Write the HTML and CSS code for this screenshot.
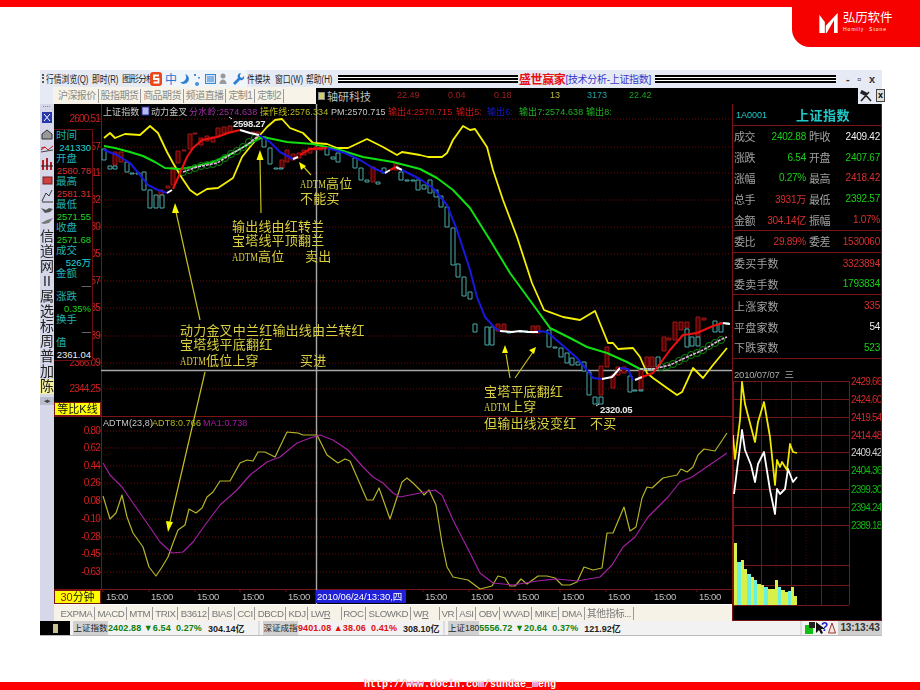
FILE: index.html
```html
<!DOCTYPE html>
<html lang="zh">
<head>
<meta charset="utf-8">
<title>技术分析-上证指数</title>
<link rel="stylesheet" href="styles.css">
</head>
<body>
<div class="page">
  <header class="top-band"></header>
  <div class="logo">
    <svg class="logo-mark" viewBox="0 0 22 24"><path d="M1 3l6 8v12H1zM21 1v22h-4V9L9 23h-1v-8z" fill="#fff"/></svg>
    <div class="logo-text"><span class="logo-cn">弘历软件</span><span class="logo-en">Homily  Stone</span></div>
  </div>

  <main class="window">
    <div class="menu-bar">
      <span class="grip"></span>
      <span class="menu-item m1">行情浏览(Q)</span>
      <span class="menu-item m2">即时(R)</span>
      <span class="menu-item m3">图形分析</span>
      <div class="ime">
        <svg viewBox="0 0 96 16" width="96" height="16">
          <rect x="0" y="1" width="12" height="14" rx="3" fill="#e8481c"/>
          <path d="M9 4.500H4v3.500h4.500v3.500H3.500" fill="none" stroke="#fff" stroke-width="1.800"/>
          <text class="ime-zh" x="15" y="12.500">中</text>
          <path d="M35 3a5 5 0 1 1-5 8a5 5 0 0 0 5-8z" fill="#2f7fd0"/>
          <path d="M44 3h2v2h-2zM48 6h2v1.500h-2zM47 11a2 2 0 1 0 .1 0" fill="#4a90d8"/>
          <rect x="55.500" y="3.500" width="10" height="9" fill="#cfe2f6" stroke="#3a88d4"/>
          <path d="M57 6h7M57 8h7M57 10h7" stroke="#3a88d4"/>
          <circle cx="73" cy="5" r="2.500" fill="#9a9a9a"/><path d="M69.500 13c0-6 7-6 7 0z" fill="#9a9a9a"/>
          <path d="M91 2c-3 0-4 3-3 5l-5 5 2 2 5-5c2 1 5-1 4-4l-2 2-2-1v-2z" fill="#2f7fd0"/>
        </svg>
      </div>
      <span class="menu-item m4">件模块</span>
      <span class="menu-item m5">窗口(W)</span>
      <span class="menu-item m6">帮助(H)</span>
      <div class="stripes"></div>
      <div class="win-title"><span class="t-red">盛世赢家</span><span class="t-blue">[技术分析-上证指数]</span></div>
      <div class="stripes s2"></div>
      <div class="win-btns"><span>-</span><span>▫</span><span>x</span></div>
    </div>

    <div class="tab-row">
      <div class="tab-lead"></div>
      <nav class="market-tabs">
        <span>沪深报价</span><span>股指期货</span><span>商品期货</span><span>频道直播</span><span>定制1</span><span>定制2</span>
      </nav>
      <div class="ticker">
        <span class="tk-icon"></span>
        <span class="tk-name">轴研科技</span>
        <span class="tk n1">22.49</span><span class="tk n2">0.04</span><span class="tk n3">0.18</span>
        <span class="tk n4">13</span><span class="tk n5">3173</span><span class="tk n6">22.42</span>
      </div>
      <div class="tool-btns">
        <svg viewBox="0 0 14 14" width="14" height="14"><path d="M2 12L10 3M4 3l8 9M3 2l4 2-1 2-4-2z" stroke="#222" stroke-width="1.600" fill="#555"/></svg>
        <span class="x-btn">x</span>
      </div>
    </div>

    <div class="main-row">
      <aside class="sidebar">
        <svg class="side-icons" viewBox="0 0 14 122" width="14" height="122">
          <path d="M3 2.500h8" stroke="#888" stroke-dasharray="1 1"/>
          <rect x="2" y="8" width="10" height="11" fill="#2838a8"/><path d="M4 10l6 7M10 10l-6 7" stroke="#fff"/>
          <path d="M2 30l5-4 5 4v5H2z" fill="#999" stroke="#333"/>
          <path d="M1 46l4-3 3 3 5-4M1 44l4-1" stroke="#c02020" fill="none"/><path d="M1 48l12-2" stroke="#444"/>
          <path d="M3 56v10M7 54v12M11 58v8" stroke="#b02020" stroke-width="2"/><path d="M1 62h12" stroke="#222"/>
          <rect x="3" y="73" width="9" height="7" fill="#d04040" stroke="#702020"/>
          <path d="M2 97l4-8 3 3 3-6M2 98h11" stroke="#333" fill="none"/>
          <path d="M1 104l5 2 3-2 4 1-3 3-5 1z" fill="#555"/>
          <path d="M1 119l6-3 6-2-4 5-5 1z" fill="#777"/>
        </svg>
        <div class="side-glyphs">
          <span>信</span><span>道</span><span>网</span><span>II</span><span>属</span><span>选</span><span>标</span><span>周</span><span>普</span><span>加</span>
          <span class="side-active">陈</span>
        </div>
        <div class="side-arrows">◂▸</div>
      </aside>

      <section class="chart-col">
        <div class="chart-area">
          <svg class="chart" viewBox="54 104 678 500" width="678" height="500" xmlns="http://www.w3.org/2000/svg">
            <!-- grid -->
            <path class="grid" d="M101 119H732M101 147H732M101 173H732M101 200H732M101 227H732M101 254H732M101 281H732M101 308H732M101 336H732M101 363H732M101 389H732M101 431H732M101 448H732M101 466H732M101 483H732M101 501H732M101 519H732M101 537H732M101 554H732M101 572H732"/>
            <path class="frame" d="M101.500 104V589M54 416.500H732M54 589.500H732"/>
            <path class="ticks" d="M101 119h-3M101 147h-3M101 173h-3M101 200h-3M101 227h-3M101 254h-3M101 281h-3M101 308h-3M101 336h-3M101 363h-3M101 389h-3M101 431h-3M101 448h-3M101 466h-3M101 483h-3M101 501h-3M101 519h-3M101 537h-3M101 554h-3M101 572h-3M103 589v3M149 589v3M195 589v3M240 589v3M286 589v3M423 589v3M469 589v3M515 589v3M560 589v3M606 589v3M652 589v3M697 589v3"/>
            <!-- price axis -->
            <g class="axis-r">
              <text x="100" y="122">2600.51</text><text x="100" y="150">57</text><text x="100" y="176">11</text>
              <text x="100" y="203">82</text><text x="100" y="230">30</text><text x="100" y="257">05</text>
              <text x="100" y="284">57</text><text x="100" y="311">35</text><text x="100" y="339">39</text>
              <text x="100" y="366">2366.09</text><text x="100" y="392">2344.25</text>
              <text x="100" y="434">0.80</text><text x="100" y="451">0.62</text><text x="100" y="469">0.44</text><text x="100" y="486">0.26</text>
              <text x="100" y="504">0.08</text><text x="100" y="522">-0.10</text><text x="100" y="540">-0.28</text><text x="100" y="557">-0.45</text><text x="100" y="575">-0.63</text>
            </g>
            <!-- crosshair -->
            <path class="cross" d="M316.500 104V605M101 370.500H732"/>
            <!-- candles -->
            <path class="c-red" d="M113 152h4V165h-4zM119 152h4V162h-4zM159 190h4V198h-4zM166 186h4V188h-4zM171 167h4V185h-4zM176 151h4V163h-4zM182 150h4V151h-4zM188 134h4V149h-4zM193 133h4V134h-4zM199 138h4V145h-4zM205 136h4V141h-4zM211 137h4V142h-4zM216 128h4V137h-4zM222 127h4V133h-4zM228 126h4V132h-4zM251 132h4V133h-4zM256 132h4V136h-4zM280 160h4V168h-4zM285 150h4V162h-4zM291 154h4V160h-4zM297 153h4V158h-4zM302 150h4V155h-4zM308 148h4V153h-4zM314 147h4V150h-4zM319 147h4V150h-4zM371 167h4V182h-4zM394 163h4V170h-4zM496 324h4V331h-4zM502 324h4V331h-4zM531 326h4V333h-4zM536 326h4V333h-4zM599 366h4V395h-4zM605 347h4V367h-4zM611 375h4V388h-4zM616 367h4V375h-4zM622 367h4V373h-4zM639 370h4V390h-4zM645 357h4V367h-4zM650 357h4V367h-4zM662 337h4V351h-4zM667 338h4V340h-4zM673 322h4V340h-4zM679 322h4V330h-4zM685 322h4V328h-4zM696 317h4V337h-4zM702 318h4V320h-4z"/>
            <path class="c-cyan" d="M102 149h4V160h-4zM108 166h4V169h-4zM113 166h4V169h-4zM125 162h4V172h-4zM130 173h4V174h-4zM136 173h4V174h-4zM142 172h4V190h-4zM148 190h4V208h-4zM154 195h4V208h-4zM160 195h4V208h-4zM262 137h4V147h-4zM268 148h4V164h-4zM274 168h4V169h-4zM279 168h4V169h-4zM325 148h4V155h-4zM331 157h4V159h-4zM336 153h4V162h-4zM353 158h4V168h-4zM359 168h4V180h-4zM365 180h4V182h-4zM376 182h4V184h-4zM382 168h4V173h-4zM399 172h4V180h-4zM405 180h4V181h-4zM411 180h4V181h-4zM416 180h4V190h-4zM422 185h4V189h-4zM428 180h4V193h-4zM434 190h4V197h-4zM439 196h4V207h-4zM445 207h4V227h-4zM451 228h4V265h-4zM456 264h4V277h-4zM462 277h4V296h-4zM468 292h4V299h-4zM473 324h4V332h-4zM485 327h4V345h-4zM490 327h4V345h-4zM507 332h4V333h-4zM519 331h4V332h-4zM524 331h4V332h-4zM547 330h4V347h-4zM553 347h4V348h-4zM559 348h4V357h-4zM565 353h4V363h-4zM570 358h4V365h-4zM576 362h4V365h-4zM582 362h4V371h-4zM587 372h4V395h-4zM593 397h4V404h-4zM599 397h4V404h-4zM628 376h4V392h-4zM633 390h4V391h-4zM639 390h4V391h-4zM656 357h4V367h-4zM685 329h4V347h-4zM690 337h4V346h-4zM696 337h4V346h-4zM713 321h4V332h-4zM719 323h4V332h-4zM725 323h4V324h-4z"/>
            <!-- upper band -->
            <polyline class="l-yellow" points="104,138 110,133 115,138 125,134 140,135 150,126 158,133 167,152 173,163 182,178 190,190 197,195 207,189 218,188 233,178 242,157 250,147 260,135 267,127 275,120 282,119 290,128 303,133 313,143 327,144 337,148 348,148 367,139 383,147 397,155 402,152 420,155 428,157 442,157 447,153 453,140 463,126 470,130 475,129 487,147 493,170 503,200 517,237 532,283 544,310 563,317 580,320 595,311 608,343 613,343 618,349 633,348 640,357 647,373 653,378 667,388 677,395 682,392 693,368 703,378 713,365 727,348"/>
            <!-- MA -->
            <polyline class="l-green" points="104,146 115,148 130,152 143,156 155,162 165,168 180,169 193,167 213,162 233,153 250,143 263,137 287,142 313,144 340,150 363,157 393,162 420,169 437,178 453,190 470,208 490,240 510,273 537,310 550,328 570,338 587,347 607,353 627,362 640,369 655,369"/>
            <!-- green rings -->
            <g class="rings">
              <circle cx="183" cy="172" r="3.500"/><circle cx="189" cy="170" r="3.500"/><circle cx="195" cy="168" r="3.500"/><circle cx="201" cy="166" r="3.500"/><circle cx="207" cy="165" r="3.500"/><circle cx="213" cy="164" r="3.500"/><circle cx="219" cy="162" r="3.500"/><circle cx="225" cy="158" r="3.500"/><circle cx="231" cy="154" r="3.500"/><circle cx="237" cy="151" r="3.500"/><circle cx="243" cy="147" r="3.500"/><circle cx="249" cy="142" r="3.500"/><circle cx="255" cy="138" r="3.500"/>
              <circle cx="661" cy="367" r="3.500"/><circle cx="667" cy="366" r="3.500"/><circle cx="673" cy="364" r="3.500"/><circle cx="679" cy="361" r="3.500"/><circle cx="685" cy="358" r="3.500"/><circle cx="691" cy="355" r="3.500"/><circle cx="697" cy="353" r="3.500"/><circle cx="703" cy="350" r="3.500"/><circle cx="709" cy="346" r="3.500"/><circle cx="715" cy="343" r="3.500"/><circle cx="721" cy="340" r="3.500"/>
            </g>
            <polyline class="l-pink" points="183,172 197,167 217,163 233,153 247,145 259,135"/>
            <polyline class="l-pink" points="640,369 653,369 670,365 687,357 703,350 720,340 727,337"/>
            <!-- output line -->
            <polyline class="l-blue" points="104,150 117,155 130,163 140,175 148,185 158,190 167,193"/>
            <polyline class="l-white" points="167,193 172,190"/>
            <polyline class="l-red" points="173,189 180,173 187,157 193,148 202,140 217,137 228,133 240,130"/>
            <polyline class="l-white" points="240,130 250,133 259,135"/>
            <polyline class="l-blue" points="259,135 270,142 280,152 293,159"/>
            <polyline class="l-white" points="293,159 298,157"/>
            <polyline class="l-red" points="300,155 310,149 327,148"/>
            <polyline class="l-blue" points="327,148 345,153 360,160 373,168 385,173"/>
            <polyline class="l-white" points="385,173 390,170"/>
            <polyline class="l-red" points="390,170 396,167"/>
            <polyline class="l-white" points="396,167 402,170"/>
            <polyline class="l-blue" points="402,170 420,179 433,188 447,205 457,230 470,270 477,297 485,317 495,328 500,331"/>
            <polyline class="l-white" points="500,331 512,332 520,331 528,332 538,332"/>
            <polyline class="l-blue" points="538,331 547,332 560,343 577,358 587,370 593,378 602,379"/>
            <polyline class="l-white" points="602,379 612,377 620,368"/>
            <polyline class="l-blue" points="620,368 628,369 633,380"/>
            <polyline class="l-white" points="635,380 642,377"/>
            <polyline class="l-red" points="642,377 653,373 670,350 683,335 697,333 713,326 723,323"/>
            <polyline class="l-white" points="723,323 730,324"/>
            <!-- lower pane -->
            <polyline class="l-olive" points="103,496 110,519 116,513 122,495 127,517 133,533 143,547 149,567 156,576 162,567 168,557 173,543 178,530 185,525 189,509 196,513 202,508 207,497 213,492 220,481 230,481 240,463 247,460 253,461 258,452 265,452 275,457 287,432 298,433 303,435 317,435 327,455 338,463 345,459 350,461 367,500 373,500 379,488 390,519 402,482 407,478 413,483 422,492 424,495 429,490 436,505 442,543 447,567 453,577 468,580 480,589 492,586 498,576 505,578 510,586 515,586 521,579 527,584 538,576 547,576 555,578 562,585 570,585 577,582 584,567 593,570 602,568 607,533 613,533 624,507 630,531 636,527 642,498 647,487 652,488 663,478 677,475 681,469 687,472 693,467 698,455 704,449 715,451 727,433"/>
            <polyline class="l-purple" points="103,463 110,475 122,487 133,503 147,523 160,542 172,553 183,552 193,542 205,525 220,505 237,490 250,475 267,462 280,457 297,443 310,438 320,435 333,440 348,450 363,467 373,477 383,483 393,493 400,497 420,493 435,490 442,495 453,520 470,553 480,573 493,583 513,585 537,581 557,579 577,581 600,577 612,565 623,547 635,537 648,517 668,497 680,482 692,477 727,453"/>
            <!-- arrows -->
            <path class="arrow" d="M200 320L176 212M261 213L260 158M311 175L302 165M205 372L170 522M510 378L506 354M515 378L533 352"/>
            <path class="head" d="M175 203l-3 10h7zM260 150l-3.500 10h7zM299 162l2 8 5-4zM168 532l5-10-7-1zM505 345l-3 8h6zM536 347l-7 3 5 4z"/>
            <!-- extremes -->
            <text class="extreme" x="233" y="127">2598.27</text>
            <path class="extreme-line" d="M232 119l-3-2M596 406l3-2"/>
            <text class="extreme" x="600" y="413">2320.05</text>
            <!-- header -->
            <g class="hdr">
              <text class="c-gray" x="103" y="115">上证指数</text>
              <rect x="142" y="107" width="7" height="8" fill="#b8b8f0" stroke="#3030a0"/>
              <text class="c-gray" x="151" y="115">动力金叉</text>
              <text class="c-mag" x="189" y="115">分水岭:2574.638</text>
              <text class="c-yel" x="260" y="115">操作线:2576.334</text>
              <text class="c-gray" x="331" y="115">PM:2570.715</text>
              <text class="c-red2" x="388" y="115">输出4:2570.715</text>
              <text class="c-red2" x="456" y="115">输出5:</text>
              <text class="c-blu" x="487" y="115">输出6:</text>
              <text class="c-grn" x="519" y="115">输出7:2574.638</text>
              <text class="c-grn" x="586" y="115">输出8:</text>
              <text class="c-gray" x="103" y="426">ADTM(23,8)</text>
              <text class="c-yel" x="152" y="426">ADT8:0.766</text>
              <text class="c-mag2" x="203" y="426">MA1:0.738</text>
            </g>
            <!-- annotations -->
            <g class="note">
              <text x="180" y="335">动力金叉中兰红输出线由兰转红</text>
              <text x="180" y="349">宝塔线平底翻红</text>
              <text x="180" y="365"><tspan textLength="26" lengthAdjust="spacingAndGlyphs">ADTM</tspan>低位上穿<tspan x="300">买进</tspan></text>
              <text x="232" y="231">输出线由红转兰</text>
              <text x="232" y="245">宝塔线平顶翻兰</text>
              <text x="232" y="261"><tspan textLength="26" lengthAdjust="spacingAndGlyphs">ADTM</tspan>高位<tspan x="305">卖出</tspan></text>
              <text x="300" y="188"><tspan textLength="26" lengthAdjust="spacingAndGlyphs">ADTM</tspan>高位</text>
              <text x="300" y="203">不能买</text>
              <text x="484" y="396">宝塔平底翻红</text>
              <text x="484" y="411"><tspan textLength="26" lengthAdjust="spacingAndGlyphs">ADTM</tspan>上穿</text>
              <text x="484" y="428">但输出线没变红<tspan x="590">不买</tspan></text>
            </g>
            <!-- time axis -->
            <g class="time">
              <text x="106" y="600">15:00</text><text x="151" y="600">15:00</text><text x="197" y="600">15:00</text><text x="242" y="600">15:00</text><text x="288" y="600">15:00</text>
              <text x="425" y="600">15:00</text><text x="471" y="600">15:00</text><text x="517" y="600">15:00</text><text x="562" y="600">15:00</text><text x="608" y="600">15:00</text><text x="654" y="600">15:00</text><text x="699" y="600">15:00</text>
            </g>
            <rect x="316" y="590" width="90" height="13" fill="#2020d8"/>
            <text class="time-hi" x="317" y="600">2010/06/24/13:30,四</text>
          </svg>
          <!-- info panel over the price axis -->
          <div class="info-box">
            <span class="ib-l">时间</span><span class="ib-v cy">241330</span>
            <span class="ib-l">开盘</span><span class="ib-v rd">2580.78</span>
            <span class="ib-l">最高</span><span class="ib-v rd">2581.31</span>
            <span class="ib-l">最低</span><span class="ib-v gn">2571.55</span>
            <span class="ib-l">收盘</span><span class="ib-v gn">2571.68</span>
            <span class="ib-l">成交</span><span class="ib-v cy">526万</span>
            <span class="ib-l">金额</span><span class="ib-v gy">—</span>
            <span class="ib-l">涨跌</span><span class="ib-v gn">0.35%</span>
            <span class="ib-l">换手</span><span class="ib-v gy">—</span>
            <span class="ib-l">值</span><span class="ib-v wh">2361.04</span>
          </div>
          <div class="btn-y ratio"><span>等比K线</span></div>
          <div class="btn-y period"><span><b>30</b>分钟</span></div>
        </div>
        <nav class="ind-tabs">
          <span>EXPMA</span><span>MACD</span><span>MTM</span><span>TRIX</span><span>B3612</span><span>BIAS</span><span>CCI</span><span>DBCD</span><span>KDJ</span><span class="u-r">LW<u>R</u></span><span class="gap-r">ROC</span><span>SLOWKD</span><span class="u-r">W<u>R</u></span><span class="gap-r">VR</span><span>ASI</span><span>OBV</span><span>WVAD</span><span>MIKE</span><span>DMA</span><span>其他指标...</span>
        </nav>
      </section>

      <aside class="quote">
        <div class="q-head"><span class="q-code">1A0001</span><span class="q-name">上证指数</span></div>
        <div class="q-sec">
          <div class="q-row"><span class="lb">成交</span><span class="g">2402.88</span><span class="lb">昨收</span><span class="w">2409.42</span></div>
          <div class="q-row"><span class="lb">涨跌</span><span class="g">6.54</span><span class="lb">开盘</span><span class="g">2407.67</span></div>
          <div class="q-row"><span class="lb">涨幅</span><span class="g">0.27%</span><span class="lb">最高</span><span class="r">2418.42</span></div>
          <div class="q-row"><span class="lb">总手</span><span class="r">3931万</span><span class="lb">最低</span><span class="g">2392.57</span></div>
          <div class="q-row"><span class="lb">金额</span><span class="r">304.14亿</span><span class="lb">振幅</span><span class="r">1.07%</span></div>
        </div>
        <div class="q-sec">
          <div class="q-row"><span class="lb">委比</span><span class="r">29.89%</span><span class="lb">委差</span><span class="r">1530060</span></div>
        </div>
        <div class="q-sec">
          <div class="q-row wide"><span class="lb">委买手数</span><span class="r">3323894</span></div>
          <div class="q-row wide"><span class="lb">委卖手数</span><span class="g">1793834</span></div>
        </div>
        <div class="q-sec">
          <div class="q-row wide"><span class="lb">上涨家数</span><span class="r">335</span></div>
          <div class="q-row wide"><span class="lb">平盘家数</span><span class="w">54</span></div>
          <div class="q-row wide"><span class="lb">下跌家数</span><span class="g">523</span></div>
        </div>
        <svg class="mini" viewBox="733 357 148 247" width="148" height="247" xmlns="http://www.w3.org/2000/svg">
          <text class="mini-date" x="734" y="376">2010/07/07  三</text>
          <path class="mini-dash" d="M747 379V603M776 379V603M806 379V603M835 379V603"/>
          <path class="mini-grid" d="M733 379.500H849M733 397.500H849M733 415.500H849M733 433.500H849M733 450.500H849M733 468.500H849M733 487.500H849M733 505.500H849M733 523.500H849M733 563.500H849M733 583.500H849M761.500 379V603M791.500 379V603M821.500 379V603M849.500 379V603M733.500 379V603M733 603.500H849"/>
          <path class="vol-y" d="M734 541h3v62h-3zM741 558h3v45h-3zM744 567h3v36h-3zM751 575h3v28h-3zM757 582h4v21h-4zM761 583h3v20h-3zM768 587h3v16h-3zM771 587h4v16h-4zM775 578h3v25h-3zM781 588h4v15h-4zM785 590h3v13h-3zM791 585h3v18h-3zM794 594h3v9h-3z"/>
          <path class="vol-c" d="M737 560h4v43h-4zM747 572h4v31h-4zM754 578h3v25h-3zM764 585h4v18h-4zM778 585h3v18h-3zM788 589h3v14h-3z"/>
          <polyline class="m-yellow" points="733,433 735,457 740,418 742,380 745,402 751,425 755,440 758,420 764,400 770,435 775,483 777,458 780,465 782,460 787,468 790,442 793,450 797,451"/>
          <polyline class="m-white" points="734,492 737,468 740,445 742,428 745,448 751,463 755,480 758,462 764,450 770,488 775,512 777,487 780,492 785,487 788,467 793,480 797,475"/>
          <g class="mini-axis">
            <text class="mr" x="851" y="383">2429.66</text><text class="mr" x="851" y="401">2424.60</text><text class="mr" x="851" y="419">2419.54</text><text class="mr" x="851" y="437">2414.48</text>
            <text class="mw" x="851" y="454">2409.42</text>
            <text class="mg" x="851" y="472">2404.36</text><text class="mg" x="851" y="491">2399.30</text><text class="mg" x="851" y="509">2394.24</text><text class="mg" x="851" y="527">2389.18</text>
          </g>
        </svg>
      </aside>
    </div>

    <footer class="status-bar">
      <div class="st-black"><span class="st-glyph"></span></div>
      <div class="st-item i1"><span class="st-name">上证指数</span><span class="dn">2402.88 ▼6.54  0.27%</span><span class="amt">304.14亿</span></div>
      <div class="st-item i2"><span class="st-name">深证成指</span><span class="up">9401.08 ▲38.06  0.41%</span><span class="amt">308.10亿</span></div>
      <div class="st-item i3"><span class="st-name">上证180</span><span class="dn">5556.72 ▼20.64  0.37%</span><span class="amt">121.92亿</span></div>
      <div class="st-icons">
        <svg viewBox="0 0 34 14" width="34" height="14">
          <rect x="3" y="4" width="8" height="9" fill="#10c010"/><rect x="7" y="1" width="6" height="6" fill="#222"/>
          <path d="M14 1v11l3-3 2 4 2-1-2-4h4z" fill="#111"/>
          <text class="st-q" x="19" y="10">?</text>
          <path d="M30 2l-3.500 10h7z" fill="#f0e8e0" stroke="#a03030"/>
        </svg>
      </div>
      <div class="st-time">13:13:43</div>
    </footer>
  </main>

  <footer class="bottom-band"><span class="url">http://www.docin.com/sundae_meng</span></footer>
</div>
</body>
</html>
```

FILE: styles.css
```css
* { box-sizing: border-box; }
html, body { margin: 0; padding: 0; background: #fff; }
body { font-family: "Liberation Sans", "Noto Sans CJK SC", sans-serif; }
.page { position: relative; width: 920px; height: 690px; overflow: hidden; display: flex; flex-direction: column; }

.top-band { height: 7px; flex: none; background: #ff0000; }
.logo { position: absolute; top: 0; right: 0; width: 128px; height: 47px; background: #f60000; border-bottom-left-radius: 18px; display: flex; align-items: flex-start; padding: 12px 0 0 26px; gap: 4px; color: #fff; }
.logo-mark { width: 21px; height: 22px; flex: none; }
.logo-text { display: flex; flex-direction: column; line-height: 1; }
.logo-cn { font-size: 12.500px; letter-spacing: -.2px; }
.logo-en { font-size: 5px; letter-spacing: 1px; margin-top: 2px; white-space: pre; }

.window { flex: none; width: 842px; margin: 63px 0 0 40px; display: flex; flex-direction: column; filter: blur(.35px); }

/* menu bar */
.menu-bar { height: 17px; display: flex; align-items: center; background: #e6eaf4; font-size: 10px; color: #222; position: relative; }
.grip { width: 2px; height: 9px; margin: 0 2px; flex: none; border-left: 2px dotted #555; }
.menu-item { flex: none; white-space: nowrap; transform: scaleX(.78); transform-origin: 0 50%; }
.m1 { width: 46px; } .m2 { width: 30px; } .m3 { width: 28px; }
.m3 { transform: none; overflow: hidden; font-size: 9px; letter-spacing: -1px; }
.ime { flex: none; width: 97px; height: 17px; background: #f0f5fb; display: flex; align-items: center; }
.ime-zh { font-size: 12px; fill: #2478d0; font-family: "Noto Sans CJK SC", sans-serif; }
.m4 { width: 28px; } .m5 { width: 31px; } .m6 { width: 32px; }
.stripes { flex: none; width: 180px; height: 8px; background: repeating-linear-gradient(#000 0, #000 2px, #fff 2px, #fff 3px); }
.s2 { width: 181px; }
.win-title { flex: none; width: 137px; display: flex; align-items: center; padding-left: 1px; white-space: nowrap; }
.t-red { font-size: 12px; font-weight: 700; color: #e81010; letter-spacing: -.4px; }
.t-blue { font-size: 10px; color: #3838c8; letter-spacing: -.3px; }
.win-btns { flex: 1; display: flex; justify-content: space-around; padding: 0 3px 0 6px; font-size: 11px; font-weight: 700; color: #333; }

/* second row */
.tab-row { height: 17px; display: flex; background: #e6eaf4; }
.tab-lead { width: 13px; flex: none; }
.market-tabs { width: 263px; flex: none; background: #f7f3e8; display: flex; align-items: center; font-size: 10px; color: #8a8a84; padding-left: 3px; }
.market-tabs span { padding: 0 2px; border-right: 1px solid #999; line-height: 14px; white-space: nowrap; letter-spacing: -.6px; }
.ticker { width: 542px; flex: none; background: #000; position: relative; margin-top: 1px; display: flex; align-items: center; font-size: 9px; }
.tk-icon { width: 7px; height: 8px; margin-left: 2px; background: #d0d070; border: 1px solid #888; flex: none; }
.tk-name { font-size: 11px; color: #c0c0c0; margin-left: 2px; width: 60px; }
.tk { position: absolute; top: 2px; }
.n1 { left: 81px; color: #a02020; } .n2 { left: 132px; color: #a02020; } .n3 { left: 178px; color: #a02020; }
.n4 { left: 234px; color: #b8b840; } .n5 { left: 271px; color: #20a0a0; } .n6 { left: 313px; color: #20a020; }
.tool-btns { flex: 1; display: flex; align-items: center; gap: 3px; padding-left: 1px; }
.x-btn { width: 9px; height: 13px; border: 1px solid #444; background: #ddd; font-size: 9px; line-height: 10px; text-align: center; font-weight: 700; }

/* main */
.main-row { display: flex; height: 517px; }
.sidebar { width: 14px; flex: none; background: #d6d8ea; display: flex; flex-direction: column; }
.side-icons { flex: none; display: block; }
.side-glyphs { display: flex; flex-direction: column; font-size: 14px; line-height: 15px; color: #222; align-items: center; padding-top: 3px; }
.side-glyphs span { width: 14px; text-align: center; }
.side-active { background: #f4f0a0; }
.side-arrows { margin-top: 3px; font-size: 7px; letter-spacing: -1px; color: #444; text-align: center; background: #b8bccc; }

.chart-col { width: 678px; flex: none; display: flex; flex-direction: column; }
.chart-area { position: relative; height: 500px; background: #000; flex: none; }
.chart { display: block; }

.grid { stroke: #6a0808; stroke-dasharray: 1 2; fill: none; }
.frame, .ticks { stroke: #7a1414; fill: none; }
.cross { stroke: #a8a8a8; stroke-width: 1.400; fill: none; }
.axis-r text { text-anchor: end; font-size: 10px; letter-spacing: -.8px; fill: #d02020; }
.c-red { stroke: #a01818; fill: #500; }
.c-cyan { stroke: #4aacac; fill: #000; }
polyline { fill: none; stroke-linejoin: round; }
.l-yellow { stroke: #f4f000; stroke-width: 1.800; }
.l-green { stroke: #10e010; stroke-width: 2; }
.l-pink { stroke: #e8b8e8; stroke-width: 1.500; stroke-dasharray: 3 1; }
.l-blue { stroke: #1818e0; stroke-width: 2; }
.l-red { stroke: #f01010; stroke-width: 2; }
.l-white { stroke: #fff; stroke-width: 2; }
.l-olive { stroke: #b4b428; stroke-width: 1.200; }
.l-purple { stroke: #a020a0; stroke-width: 1.200; }
.rings circle { fill: none; stroke: #108a10; }
.arrow { stroke: #c4c020; stroke-width: 1.200; fill: none; }
.head { fill: #f8f800; }
.extreme { font-size: 9.500px; letter-spacing: -.3px; font-weight: 700; fill: #e8e8e8; }
.extreme-line { stroke: #ddd; fill: none; }
.hdr text { font-size: 9px; letter-spacing: .1px; }
.c-gray { fill: #c8c8c8; } .c-mag { fill: #a030a0; } .c-yel { fill: #b8b820; } .c-red2 { fill: #c81818; }
.c-blu { fill: #1818c8; } .c-grn { fill: #20b020; } .c-mag2 { fill: #a818a8; }
.note text { font-family: "Liberation Serif", "Noto Sans CJK SC", serif; font-size: 13px; fill: #d8d040; letter-spacing: .2px; }
.time text { font-size: 9.500px; letter-spacing: -.4px; fill: #c0c0c0; }
.time-hi { font-size: 9.500px; fill: #fff; letter-spacing: -.05px; }

.info-box { position: absolute; left: 0; top: 25px; width: 39px; height: 232px; background: #000; border: 1px solid #6a1010; border-left: 0; display: flex; flex-direction: column; padding: 0 1px 0 2px; font-size: 10.500px; line-height: 11.500px; }
.ib-l { color: #20b0b0; }
.ib-v { text-align: right; white-space: nowrap; font-size: 9.500px; }
.cy { color: #20d8d8; } .rd { color: #d83030; } .gn { color: #20d020; } .gy { color: #aaa; } .wh { color: #eee; }

.btn-y { position: absolute; left: 0; height: 14px; width: 47px; background: #ffff00; border: 1px solid #7a1414; display: flex; align-items: center; justify-content: center; font-size: 11px; line-height: 1; color: #111; }
.ratio { top: 298px; }
.period { top: 486px; }
.period b { color: #a01010; font-weight: 400; }

.ind-tabs { height: 16px; margin-top: 1px; background: #f6f2e8; display: flex; align-items: center; padding-left: 5px; font-size: 9.700px; letter-spacing: -.4px; color: #777; flex: none; }
.ind-tabs span { padding: 0 1.500px; margin-right: 1px; border-right: 1px solid #999; line-height: 13px; white-space: nowrap; }
.ind-tabs .u-r { border-right: 0; }
.ind-tabs .gap-r { margin-left: 8px; border-left: 1px solid #999; }

.quote { width: 150px; flex: none; background: #000; border: 1px solid #7a1414; border-width: 0 1px 1px 1px; display: flex; flex-direction: column; }
.q-head { height: 22px; border-bottom: 1px solid #7a1414; display: flex; align-items: center; padding-left: 3px; }
.q-code { color: #20c8c8; font-size: 9px; width: 60px; }
.q-name { font-family: "Noto Sans CJK SC", sans-serif; color: #20c8c8; font-size: 13px; font-weight: 700; letter-spacing: .5px; }
.q-sec { border-bottom: 1px solid #7a1414; }
.q-row { height: 20.800px; display: grid; grid-template-columns: 24px 48px 26px 48px; align-items: center; padding-left: 1px; font-size: 10px; letter-spacing: -.25px; }
.q-row.wide { grid-template-columns: 60px 86px; }
.q-row span { text-align: right; white-space: nowrap; }
.q-row .lb { text-align: left; color: #a0a0a0; font-size: 11px; letter-spacing: -.4px; }
.q-row .lb:nth-child(3) { padding-left: 3px; }
.q-row.wide .lb { letter-spacing: .2px; }
.g { color: #18d018; } .r { color: #d83030; } .w { color: #eee; }

.mini { display: block; background: #000; }
.mini-date { font-size: 9.500px; letter-spacing: -.2px; fill: #aaa; white-space: pre; }
.mini-grid { stroke: #741616; fill: none; }
.mini-dash { stroke: #3c0808; stroke-dasharray: 1 2; fill: none; }
.vol-y { fill: #d8f048; }
.vol-c { fill: #68f0e0; }
.m-yellow { stroke: #f0e800; stroke-width: 1.800; }
.m-white { stroke: #fff; stroke-width: 1.800; }
.mini-axis text { font-size: 10px; letter-spacing: -.8px; }
.mr { fill: #d02828; } .mw { fill: #ccc; } .mg { fill: #10b810; }

/* status bar */
.status-bar { height: 15px; display: flex; align-items: stretch; background: #f2f2f2; border-bottom: 1px solid #bbb; font-size: 9px; font-weight: 700; white-space: pre; }
.st-black { width: 30px; background: #000; flex: none; display: flex; align-items: center; justify-content: center; margin-right: 3px; }
.st-glyph { width: 5px; height: 9px; background: #c8c090; }
.st-item { display: flex; align-items: center; flex: none; border-right: 2px solid #ddd; }
.i1 { width: 187px; } .i2 { width: 185px; } .i3 { width: 357px; }
.st-name { background: #d0d0d0; color: #222; font-size: 8.500px; padding: 0; text-align: center; line-height: 14px; height: 14px; font-weight: 400; }
.i1 .st-name, .i2 .st-name { width: 35px; }
.i2 .st-name, .i3 .st-name { margin-left: 3px; }
.dn { color: #108010; } .up { color: #e01010; }
.dn, .up { letter-spacing: .1px; }
.amt { color: #222; margin-left: 6px; }
.st-icons { width: 36px; flex: none; display: flex; align-items: center; }
.st-q { font-size: 12px; font-weight: 700; fill: #1818c0; }
.st-time { flex: 1; background: #cfcfcf; font-size: 10px; letter-spacing: -.1px; line-height: 14px; text-align: center; color: #333; }

.bottom-band { margin-top: 46px; height: 8px; background: #ff0000; flex: none; position: relative; }
.url { position: absolute; left: 364px; top: -3px; font-family: "Liberation Mono", monospace; font-size: 10px; font-weight: 700; line-height: 12px; color: #fff; text-shadow: 0 0 1px #c00; }
```
